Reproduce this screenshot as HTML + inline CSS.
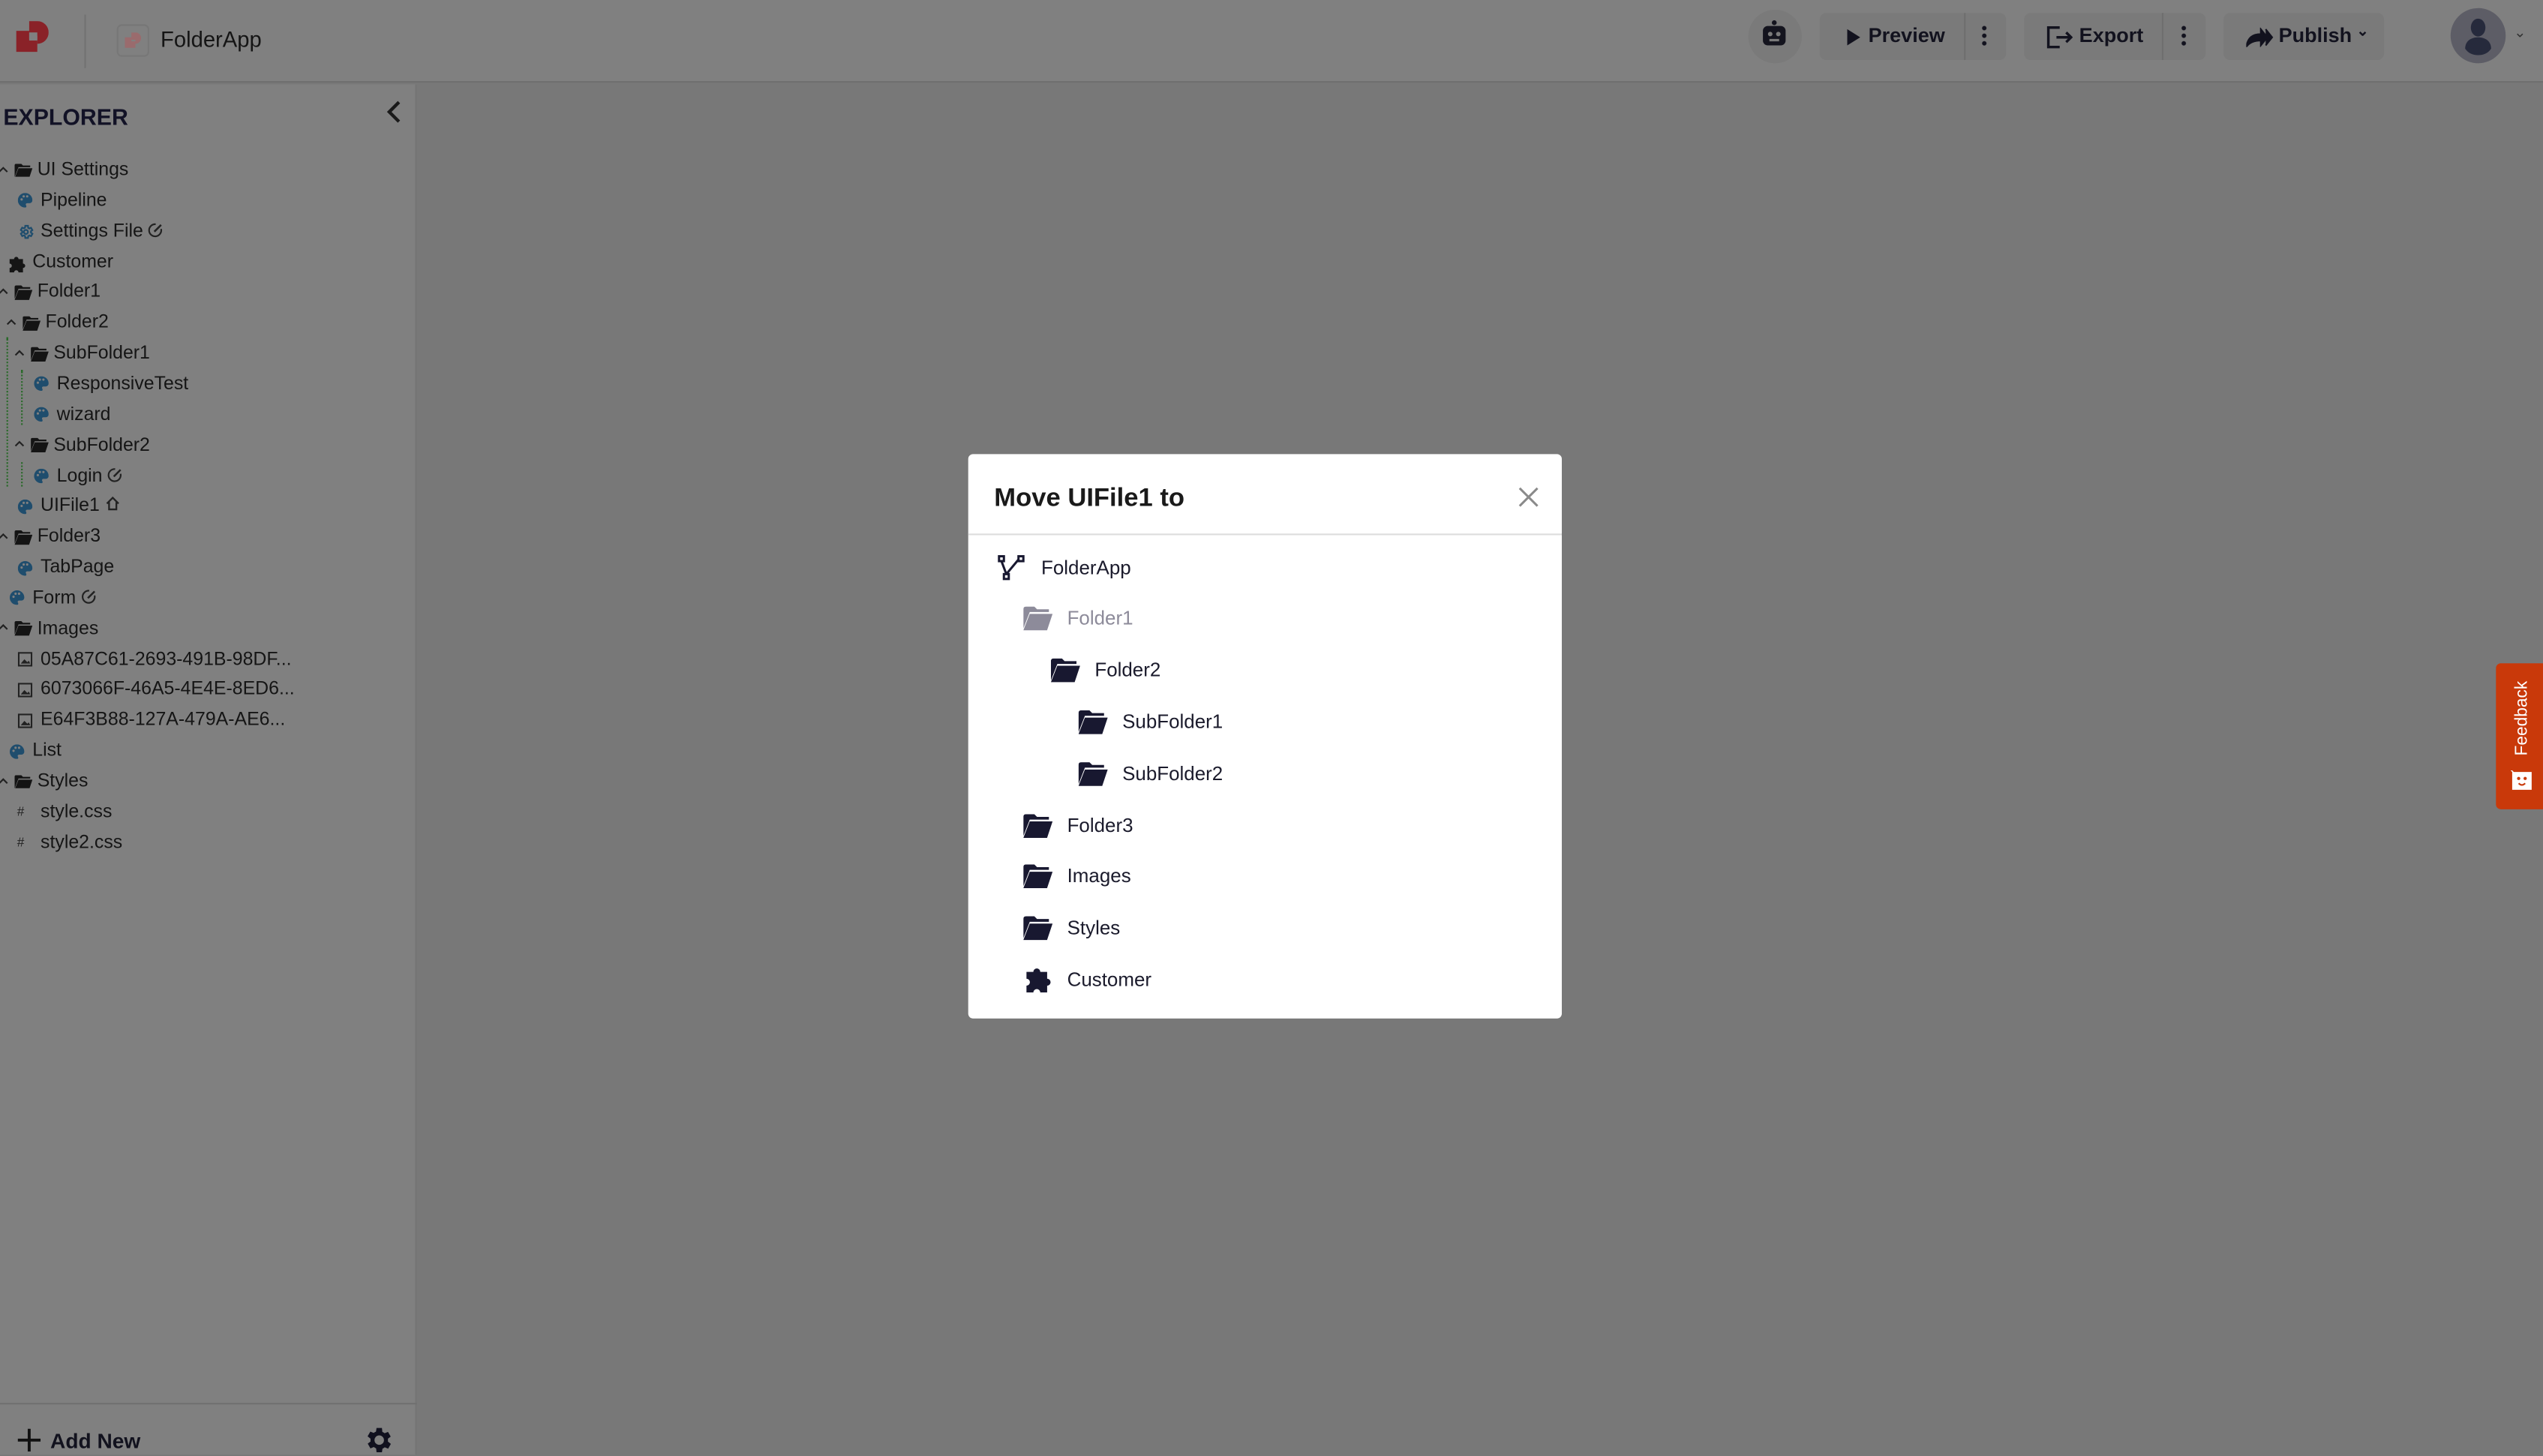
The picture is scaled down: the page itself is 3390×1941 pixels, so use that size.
<!DOCTYPE html>
<html><head><meta charset="utf-8">
<style>
*{margin:0;padding:0;box-sizing:border-box}
html,body{width:3390px;height:1939px;overflow:hidden;background:#787878}
#w{position:absolute;left:0;top:0;width:1568px;height:897px;transform:scale(2.16199);transform-origin:0 0;font-family:"Liberation Sans",sans-serif;color:#141414}
.hdr{position:absolute;left:0;top:0;width:1568px;height:51px;background:#808080;border-bottom:1px solid #6e6e6e}
.side{position:absolute;left:0;top:52px;width:257px;height:845px;background:#808080;border-right:1px solid #747474}
.main{position:absolute;left:258px;top:52px;right:0;bottom:0;background:#787878}
.r{position:absolute;font-size:11.5px;line-height:14px;white-space:nowrap;color:#151515}
.ic{position:absolute}
.ic svg{display:block}
.btn{position:absolute;top:8px;height:29px;background:#7a7a7a;border-radius:4px;font-size:12.5px;font-weight:bold;color:#12121e}
.modal{position:absolute;left:597px;top:280px;width:366px;height:348px;background:#fff;border-radius:3px}
.mi{position:absolute;font-size:12px;color:#1b1b2c}
</style></head><body><div id="w">
<div class="hdr">
 <svg class="ic" style="left:10px;top:13px" width="20" height="20" viewBox="0 0 20 20"><path d="M8 0h5a7 7 0 0 1 0 14H13V9h-5z" fill="#8a2228"/><path d="M0 6h8v5h5v8H0z" fill="#8a2228"/><rect x="8" y="7" width="5" height="5" fill="#808080"/></svg>
 <div style="position:absolute;left:52px;top:9px;width:1px;height:33px;background:#727272"></div>
 <div style="position:absolute;left:72px;top:15px;width:20px;height:20px;border:1px solid #777;border-radius:3px"></div>
 <svg class="ic" style="left:77px;top:20px" width="10" height="10" viewBox="0 0 20 20"><path d="M8 0h5a7 7 0 0 1 0 14H13V9h-5z" fill="#9a6b6d"/><path d="M0 6h8v5h5v8H0z" fill="#9a6b6d"/></svg>
 <div style="position:absolute;left:99px;top:17px;font-size:13.5px;color:#151515">FolderApp</div>
 <div style="position:absolute;left:1078px;top:6px;width:33px;height:33px;border-radius:50%;background:#7a7a7a"></div>
 <svg class="ic" style="left:1085px;top:12px" width="18" height="18" viewBox="0 0 18 18"><circle cx="9" cy="2" r="1.5" fill="#14141e"/><rect x="2" y="4" width="14" height="12" rx="3" fill="#14141e"/><circle cx="6.5" cy="9" r="1.4" fill="#7a7a7a"/><circle cx="11.5" cy="9" r="1.4" fill="#7a7a7a"/><rect x="6" y="12" width="6" height="1.5" fill="#7a7a7a"/></svg>
 <div class="btn" style="left:1122px;width:115px"><svg class="ic" style="left:17px;top:10px" width="8" height="10"><path d="M0 0l8 5-8 5z" fill="#12121e"/></svg><span style="position:absolute;left:30px;top:7px">Preview</span><div style="position:absolute;left:89px;top:0;width:1px;height:29px;background:#6f6f6f"></div><span style="position:absolute;left:100px;top:7px;width:3px;height:14px;background:radial-gradient(circle,#12121e 1.2px,transparent 1.5px) 0 0/3px 4.7px"></span></div>
 <div class="btn" style="left:1248px;width:112px"><svg class="ic" style="left:14px;top:8px" width="16" height="14" viewBox="0 0 16 14"><path d="M8 1H1v12h7M6 7h9M12 4l3 3-3 3" stroke="#12121e" stroke-width="1.6" fill="none"/></svg><span style="position:absolute;left:34px;top:7px">Export</span><div style="position:absolute;left:85px;top:0;width:1px;height:29px;background:#6f6f6f"></div><span style="position:absolute;left:97px;top:7px;width:3px;height:14px;background:radial-gradient(circle,#12121e 1.2px,transparent 1.5px) 0 0/3px 4.7px"></span></div>
 <div class="btn" style="left:1371px;width:99px"><svg class="ic" style="left:14px;top:9px" width="18" height="12" viewBox="0 0 18 12"><path d="M0 12C1 6 4 4 9 4V1l4 5-4 5V8C5 8 2 9 0 12z M12 1l4 5-4 5" fill="#12121e" stroke="#12121e" stroke-width="1"/></svg><span style="position:absolute;left:34px;top:7px">Publish</span><span style="position:absolute;left:82px;top:6px;font-size:9px">&#8964;</span></div>
 <div style="position:absolute;left:1511px;top:5px;width:34px;height:34px;border-radius:50%;background:#5d5d66"></div>
 <svg class="ic" style="left:1518px;top:11px" width="20" height="24" viewBox="0 0 20 24"><ellipse cx="10" cy="6" rx="4.5" ry="5.5" fill="#262a3c"/><path d="M2 19c0-5 4-7 8-7s8 2 8 7c-2 3-5 4-8 4s-6-1-8-4z" fill="#262a3c"/></svg>
 <span style="position:absolute;left:1550px;top:15px;font-size:9px;color:#333">&#8964;</span>
</div>
<div class="side">
 <div style="position:absolute;left:2px;top:12px;font-size:14px;font-weight:bold;color:#121226">EXPLORER</div>
 <svg class="ic" style="left:238px;top:10px" width="10" height="14"><path d="M8 1L2 7l6 6" stroke="#1a1a1a" stroke-width="2" fill="none"/></svg>
 <div style="position:absolute;left:0;top:813px;width:257px;height:1px;background:#707070"></div>
 <svg class="ic" style="left:10px;top:828px" width="16" height="16"><path d="M8 1v14M1 8h14" stroke="#111" stroke-width="1.8"/></svg>
 <div style="position:absolute;left:31px;top:829px;font-size:13px;font-weight:bold;color:#12121e">Add New</div>
 <svg class="ic" style="left:223px;top:826px" width="20" height="20" viewBox="0 0 24 24"><path fill="#10101e" d="M19.4 13a7.5 7.5 0 0 0 0-2l2.1-1.6-2-3.5-2.5 1a7 7 0 0 0-1.7-1L15 3h-4l-.4 2.7a7 7 0 0 0-1.7 1l-2.5-1-2 3.5L6.6 11a7.5 7.5 0 0 0 0 2l-2.1 1.6 2 3.5 2.5-1a7 7 0 0 0 1.7 1L11 21h4l.4-2.7a7 7 0 0 0 1.7-1l2.5 1 2-3.5zM13 15.5a3.5 3.5 0 1 1 0-7 3.5 3.5 0 0 1 0 7z"/></svg>
</div>
<div id="tree"></div>
<div class="main"></div>
<div class="modal">
 <div style="position:absolute;left:16px;top:19px;font-size:16px;font-weight:bold;color:#1a1a1a">Move UIFile1 to</div>
 <svg class="ic" style="left:339px;top:20px" width="13" height="13"><path d="M1 1l11 11M12 1L1 12" stroke="#8a8a8a" stroke-width="1.4"/></svg>
 <div style="position:absolute;left:0;top:49px;width:366px;height:1px;background:#ddd"></div>
 <svg class="ic" style="left:18px;top:62px" width="18" height="16" viewBox="0 0 18 16"><rect x="1" y="1" width="3" height="3" fill="none" stroke="#181830" stroke-width="1.4"/><rect x="13" y="1" width="3" height="3" fill="none" stroke="#181830" stroke-width="1.4"/><rect x="4" y="12" width="3" height="3" fill="none" stroke="#181830" stroke-width="1.4"/><path d="M2.5 4L5.5 12M13 3L5.5 12" stroke="#181830" stroke-width="1.4"/></svg>
 <div class="mi" style="left:45px;top:63px">FolderApp</div>
</div>
<div style="position:absolute;left:1539px;top:409px;width:29px;height:90px;background:#c9390a;border-radius:3px 0 0 3px"></div>
<div style="position:absolute;left:1549px;top:466px;transform:rotate(-90deg);transform-origin:0 0;font-size:10.5px;color:#fff">Feedback</div>
<svg style="position:absolute;left:1548px;top:475px" width="14" height="13" viewBox="0 0 14 13"><path d="M0 0h1l1 1h11v11H1V1z" fill="#fff"/><circle cx="5" cy="5" r="1" fill="#c9390a"/><circle cx="9" cy="5" r="1" fill="#c9390a"/><path d="M5 8q2 2 4 0" stroke="#c9390a" fill="none"/></svg>
<script>
var F='<svg width="W" height="H" viewBox="0 0 16 13"><path d="M0 1.5Q0 0 1.5 0H6l1.5 1.5H14V3H3.5L0 12z M3.5 4H16l-3 9H0z" fill="C"/></svg>';
function folder(w,c){return F.replace('W',w).replace('H',w*13/16).replace('C',c)}
var pal='<svg width="9" height="9" viewBox="0 0 10 10"><path d="M5 0a5 5 0 0 0 0 10c1 0 1-1 .6-1.6-.4-.6 0-1.4.8-1.4H8a2 2 0 0 0 2-2A5 5 0 0 0 5 0z" fill="#1f4d6d"/><circle cx="2.6" cy="4.4" r=".8" fill="#808080"/><circle cx="4" cy="2.3" r=".8" fill="#808080"/><circle cx="6.4" cy="2.3" r=".8" fill="#808080"/></svg>';
var gear='<svg width="10" height="10" viewBox="0 0 24 24"><path fill="none" stroke="#1f4d6d" stroke-width="2.5" d="M19.4 13a7.5 7.5 0 0 0 0-2l2.1-1.6-2-3.5-2.5 1a7 7 0 0 0-1.7-1L15 3h-4l-.4 2.7a7 7 0 0 0-1.7 1l-2.5-1-2 3.5L6.6 11a7.5 7.5 0 0 0 0 2l-2.1 1.6 2 3.5 2.5-1a7 7 0 0 0 1.7 1L11 21h4l.4-2.7a7 7 0 0 0 1.7-1l2.5 1 2-3.5z"/><circle cx="12" cy="12" r="3" fill="none" stroke="#1f4d6d" stroke-width="2.5"/></svg>';
var puz='<svg width="11" height="11" viewBox="0 0 12 12"><path d="M1 3h3a1.5 1.5 0 1 1 3 0h3v3a1.5 1.5 0 1 1 0 3v3H7a1.5 1.5 0 1 0-3 0H1V9a1.5 1.5 0 1 0 0-3z" fill="#151515"/></svg>';
var img='<svg width="9" height="9" viewBox="0 0 10 10"><rect x=".6" y=".6" width="8.8" height="8.8" fill="none" stroke="#222" stroke-width="1.1"/><path d="M2 8l2.5-3 2 2 1-1L8.5 8z" fill="#222"/></svg>';
var edit=' <svg width="10" height="10" viewBox="0 0 12 12" style="vertical-align:-1px;display:inline"><path d="M10 5A4.5 4.5 0 1 1 6 1.5" fill="none" stroke="#222" stroke-width="1.2"/><path d="M5 7l5-5" stroke="#222" stroke-width="1.4"/></svg>';
var home=' <svg width="9" height="9" viewBox="0 0 10 10" style="vertical-align:0;display:inline"><path d="M1 5l4-4 4 4M2.5 4v5h5V4" fill="none" stroke="#222" stroke-width="1.2"/></svg>';
var chev='<svg width="6" height="5"><path d="M.5 4L3 1.5 5.5 4" fill="none" stroke="#222" stroke-width="1"/></svg>';
// [text, type, textX, hasChevron, suffix]
var rows=[
['UI Settings',1,23,1],['Pipeline','p',25],['Settings File','g',25,0,edit],['Customer','z',20],
['Folder1',1,23,1],['Folder2',1,28,1],['SubFolder1',1,33,1],['ResponsiveTest','p',35],['wizard','p',35],['SubFolder2',1,33,1],['Login','p',35,0,edit],['UIFile1','p',25,0,home],
['Folder3',1,23,1],['TabPage','p',25],['Form','p',20,0,edit],['Images',1,23,1],['05A87C61-2693-491B-98DF...','i',25],['6073066F-46A5-4E4E-8ED6...','i',25],['E64F3B88-127A-479A-AE6...','i',25],['List','p',20],['Styles',1,23,1],['style.css','#',25],['style2.css','#',25]];
var h='';
rows.forEach(function(r,i){
 var y=105+i*18.85;var tx=r[2];
 var icon=r[1]==1?folder(11,'#141414'):r[1]=='p'?pal:r[1]=='g'?gear:r[1]=='z'?puz:r[1]=='i'?img:'<span style="font-size:8px;color:#222;line-height:9px;display:block">#</span>';
 var ix=r[1]==1?tx-14.5:r[1]=='z'?tx-15:tx-14.5;
 h+='<div class="ic" style="left:'+ix+'px;top:'+(y-4.5)+'px">'+icon+'</div>';
 if(r[3]) h+='<div class="ic" style="left:'+(tx-24)+'px;top:'+(y-3.5)+'px">'+chev+'</div>';
 h+='<div class="r" style="left:'+tx+'px;top:'+(y-7)+'px">'+r[0]+(r[4]||'')+'</div>';
});
h+='<div class="ic" style="left:4px;top:208px;width:0;height:92px;border-left:1px dotted #2a6a2a"></div><div class="ic" style="left:13px;top:228px;width:0;height:34px;border-left:1px dotted #2a6a2a"></div><div class="ic" style="left:13px;top:285px;width:0;height:15px;border-left:1px dotted #2a6a2a"></div>';
document.getElementById('tree').innerHTML=h;
var m=[['Folder1',34,'#8d8b9a',101],['Folder2',51,'#181830',133],['SubFolder1',68,'#181830',165],['SubFolder2',68,'#181830',197],['Folder3',34,'#181830',229],['Images',34,'#181830',260],['Styles',34,'#181830',292]];
var mh='';
m.forEach(function(r){mh+='<div class="ic" style="left:'+r[1]+'px;top:'+(r[3]-7)+'px">'+folder(18,r[2])+'</div><div class="mi" style="left:'+(r[1]+27)+'px;top:'+(r[3]-7)+'px;color:'+(r[0]=='Folder1'?'#8d8b9a':'#1b1b2c')+'">'+r[0]+'</div>';});
mh+='<div class="ic" style="left:34px;top:315px"><svg width="18" height="17" viewBox="0 0 12 12"><path d="M1 3h3a1.5 1.5 0 1 1 3 0h3v3a1.5 1.5 0 1 1 0 3v3H7a1.5 1.5 0 1 0-3 0H1V9a1.5 1.5 0 1 0 0-3z" fill="#181830"/></svg></div><div class="mi" style="left:61px;top:317px">Customer</div>';
document.querySelector('.modal').insertAdjacentHTML('beforeend',mh);
</script>
</div></body></html>
